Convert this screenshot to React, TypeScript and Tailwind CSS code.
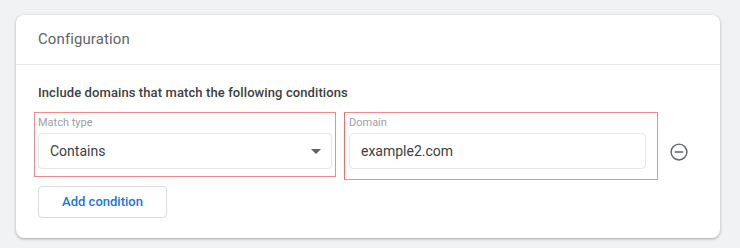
import { useState } from 'react'

function MinusCircle() {
  return (
    <svg width="20" height="20" viewBox="0 0 24 24" fill="none" stroke="#5f6368" strokeWidth="1.7">
      <circle cx="12" cy="12" r="9.5" />
      <path d="M7.5 12h9" strokeLinecap="round" />
    </svg>
  )
}

export default function App() {
  const [domain, setDomain] = useState('example2.com')

  return (
    <div className="w-[740px] h-[248px] bg-[#f1f2f4] pt-[15px] pl-[16px] font-['Roboto','Liberation_Sans',sans-serif]">
      <div className="w-[704px] h-[223px] bg-white rounded-[8px] shadow-[0_1px_3px_rgba(60,64,67,0.3),0_1px_2px_rgba(60,64,67,0.15)]">
        {/* Header */}
        <div className="h-[50px] flex items-center px-[22px] border-b border-[#e8eaed]">
          <span className="text-[15px] text-[#5f6368] tracking-[0.1px]">Configuration</span>
        </div>

        {/* Body */}
        <div className="pl-[18px] pt-[19px]">
          <p className="pl-[4px] text-[13px] leading-[18px] font-medium tracking-[0.1px] text-[#3c4043]">
            Include domains that match the following conditions
          </p>

          <div className="flex items-start mt-[10px]">
            <div className="w-[302px] h-[65px] border border-[#f28b8b] px-[3px] pt-[3px]">
              <div className="text-[11px] leading-[14px] text-[#9aa0a6]">Match type</div>
              <div className="mt-[3px] h-[36px] border border-[#e6e6e6] rounded-[4px] flex items-center justify-between pl-[11px] pr-[10px]">
                <span className="text-[14px] text-[#3c4043]">Contains</span>
                <svg width="10" height="5" viewBox="0 0 10 5">
                  <path d="M0 0h10L5 5z" fill="#5f6368" />
                </svg>
              </div>
            </div>

            <div className="ml-[8px] w-[314px] h-[68px] border border-[#f28b8b] border-l-[#f26b6b] px-[4px] pt-[3px]">
              <div className="text-[11px] leading-[14px] text-[#9aa0a6]">Domain</div>
              <div className="mt-[3px] w-[297px] h-[36px] border border-[#e6e6e6] rounded-[4px] flex items-center pl-[11px]">
                <input
                  value={domain}
                  onChange={(e) => setDomain(e.target.value)}
                  className="w-full outline-none text-[14px] text-[#3c4043] bg-transparent"
                />
              </div>
            </div>

            <button className="ml-[11px] mt-[30px] flex items-center justify-center">
              <MinusCircle />
            </button>
          </div>

          <button className="ml-[4px] mt-[6px] w-[129px] h-[32px] border border-[#dadce0] rounded-[4px] text-[13px] font-medium text-[#1a73e8]">
            Add condition
          </button>
        </div>
      </div>
    </div>
  )
}
